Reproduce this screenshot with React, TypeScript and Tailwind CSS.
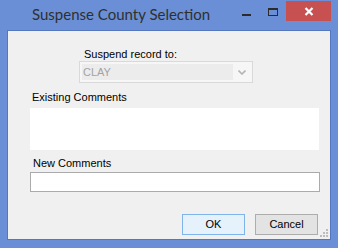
import React from "react";

export default function App() {
  const ui = { fontFamily: '"Liberation Sans", Arial, sans-serif' };
  return (
    <div className="w-[338px] h-[248px] bg-[#6a8fd6] flex flex-col overflow-hidden relative">
      {/* Title bar */}
      <div className="h-[30px] flex items-start shrink-0">
        <div
          className="pl-[32px] pt-[5px] text-[15px] leading-[18px] text-[#2f2f2f] whitespace-nowrap"
          style={{ fontFamily: 'Lato, "Noto Sans", sans-serif' }}
        >
          Suspense County Selection
        </div>
        <div className="flex-1" />
        <div className="flex mt-[1px] mr-[7px]">
          <div className="w-[26px] h-[20px] flex items-center justify-center">
            <div className="w-[9px] h-[2px] bg-[#2b2b2b] mt-[7px]" />
          </div>
          <div className="w-[27px] h-[20px] flex items-start justify-center pt-[7px]">
            <div className="w-[10px] h-[8px] border border-[#2b2b2b] border-t-2" />
          </div>
          <div className="w-[45px] h-[20px] bg-[#c75050] flex items-center justify-center">
            <svg width="10" height="9" viewBox="0 0 10 9">
              <path d="M1.5 1 L8.5 8 M8.5 1 L1.5 8" stroke="#ffffff" strokeWidth="2.2" strokeLinecap="butt" />
            </svg>
          </div>
        </div>
      </div>
      {/* Client area */}
      <div className="mx-[7px] h-[210px] border border-[#5577bd] bg-[#f0f0f0] relative shrink-0" style={ui}>
        <div className="flex flex-col text-[11px] leading-[13px] text-black">
          <div className="mt-[17px] ml-[76px] h-[13px]">Suspend record to:</div>
          <div className="ml-[71px] w-[174px] h-[22px] border border-[#d9d9d9] bg-[#f6f6f6] flex items-start p-[2px]">
            <div className="w-[151px] h-[16px] bg-[#ececec] text-[#a3a3a3] pl-[1px] pt-[2px] leading-[13px]">CLAY</div>
            <div className="flex-1 flex justify-center pt-[6px]">
              <svg width="8" height="5" viewBox="0 0 8 5">
                <path d="M0.5 0.5 L4 4 L7.5 0.5" stroke="#b4b4b4" strokeWidth="1.6" fill="none" />
              </svg>
            </div>
          </div>
          <div className="mt-[8px] ml-[24px] h-[13px]">Existing Comments</div>
          <div className="mt-[4px] ml-[22px] w-[289px] h-[42px] bg-white" />
          <div className="mt-[7px] ml-[25px] h-[13px]">New Comments</div>
          <div className="mt-[2px] ml-[22px] w-[290px] h-[20px] bg-white border border-[#ababab]" />
          <div className="mt-[22px] ml-[174px] flex gap-[10px]">
            <div className="w-[63px] h-[21px] border border-[#7eb4ea] bg-[#e5f1fb] flex items-center justify-center">OK</div>
            <div className="w-[63px] h-[21px] border border-[#adadad] bg-[#e3e3e3] flex items-center justify-center">Cancel</div>
          </div>
        </div>
        <svg className="absolute right-[2px] bottom-[2px]" width="8" height="8" viewBox="0 0 8 8">
          <rect x="6" y="0" width="2" height="2" fill="#bdbdbd" />
          <rect x="3" y="3" width="2" height="2" fill="#bdbdbd" />
          <rect x="6" y="3" width="2" height="2" fill="#bdbdbd" />
          <rect x="0" y="6" width="2" height="2" fill="#bdbdbd" />
          <rect x="3" y="6" width="2" height="2" fill="#bdbdbd" />
          <rect x="6" y="6" width="2" height="2" fill="#bdbdbd" />
        </svg>
      </div>
    </div>
  );
}
